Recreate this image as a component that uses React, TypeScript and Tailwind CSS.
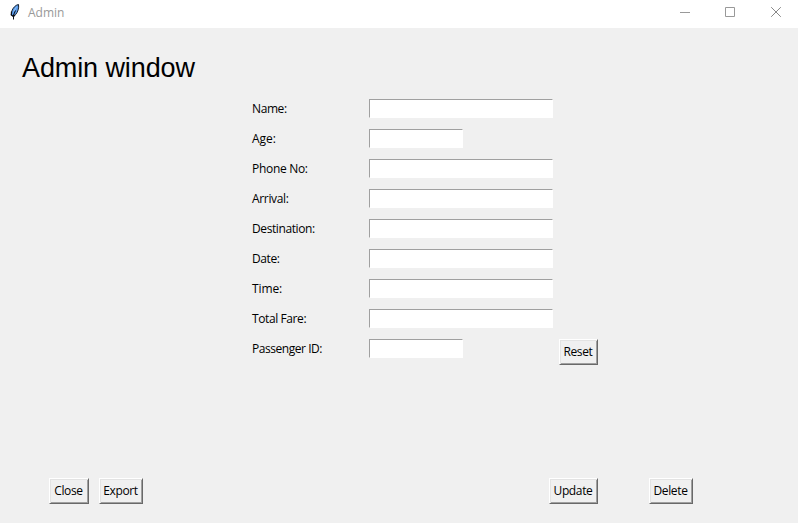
type Field = { label: string; short?: boolean; spacing: string };

const fields: Field[] = [
  { label: 'Name:', spacing: 'tracking-[-0.4px]' },
  { label: 'Age:', short: true, spacing: 'tracking-[0px]' },
  { label: 'Phone No:', spacing: 'tracking-[-0.3px]' },
  { label: 'Arrival:', spacing: 'tracking-[-0.33px]' },
  { label: 'Destination:', spacing: 'tracking-[-0.4px]' },
  { label: 'Date:', spacing: 'tracking-[-0.4px]' },
  { label: 'Time:', spacing: 'tracking-[-0.1px]' },
  { label: 'Total Fare:', spacing: 'tracking-[-0.4px]' },
  { label: 'Passenger ID:', short: true, spacing: 'tracking-[-0.45px]' },
];

function TkButton({ label, className }: { label: string; className: string }) {
  return (
    <button
      className={`flex h-[26px] shrink-0 items-center justify-center whitespace-nowrap border border-t-white border-l-white border-r-[#696969] border-b-[#696969] bg-[#f0f0f0] pr-px tracking-[-0.35px] shadow-[inset_1px_1px_0_#e3e3e3,inset_-1px_-1px_0_#a0a0a0] ${className}`}
    >
      {label}
    </button>
  );
}

function Feather() {
  return (
    <svg width="12" height="18" viewBox="0 0 12 18" className="ml-[9px] mt-[3px] shrink-0">
      <path
        d="M9.500 1.500C6.500 2 3.800 5 2.800 8.200L2.300 12l2.200 1.500 2.200-2C8.800 9 10.200 5 9.500 1.500Z"
        fill="#5a9cec"
        stroke="#16202e"
        strokeWidth="1"
      />
      <path d="M8.300 3C6.300 4.500 4.600 7 4 9.500l2.500-3Z" fill="#8fc2fa" />
      <path d="M2.500 8.500 2.300 12l2.200 1.500 1.500-1.500" fill="none" stroke="#0b0f16" strokeWidth="1.200" />
      <path d="M6.500 7.500 4.500 12v4.500" fill="none" stroke="#0b0f16" strokeWidth="1" />
    </svg>
  );
}

function TitleBar() {
  return (
    <header className="flex h-7 bg-white text-[#999999]">
      <Feather />
      <span className="ml-[7px] mt-[5px] text-xs leading-4">Admin</span>
      <svg width="102" height="12" viewBox="0 0 102 12" className="ml-auto mr-[16px] mt-[6px]" fill="none" stroke="#999999">
        <path d="M0 6.500h10" />
        <path d="M45.500 1.500h9v9h-9z" />
        <path d="M91.200 1.200l9.600 9.600M100.800 1.200l-9.600 9.600" stroke="#888888" />
      </svg>
    </header>
  );
}

export default function App() {
  return (
    <div className="flex h-[523px] w-[798px] flex-col overflow-hidden bg-[#f0f0f0] font-['Open_Sans','Noto_Sans',sans-serif] text-xs text-black">
      <TitleBar />
      <h1 className="ml-[22px] mt-[24px] h-[32px] font-['Liberation_Sans',sans-serif] text-[27px] leading-8 tracking-[-0.1px]">Admin window</h1>
      <div className="ml-[252px] mt-[15px] flex items-end">
        <form className="flex w-[307px] flex-col gap-[11px]">
          {fields.map((f) => (
            <label key={f.label} className="flex h-[19px] items-center">
              <span className={`w-[117px] ${f.spacing}`}>{f.label}</span>
              <input
                className={`h-[19px] border border-t-[#a0a0a0] border-l-[#a0a0a0] border-r-white border-b-white bg-white outline-none ${f.short ? 'w-[94px]' : 'w-[184px]'}`}
              />
            </label>
          ))}
        </form>
        <TkButton label="Reset" className="-mb-[7px] w-[39px]" />
      </div>
      <footer className="mb-[19px] ml-[49px] mr-[105px] mt-auto flex">
        <TkButton label="Close" className="w-[40px]" />
        <TkButton label="Export" className="ml-[10px] w-[44px]" />
        <TkButton label="Update" className="ml-auto w-[49px]" />
        <TkButton label="Delete" className="ml-[51px] w-[44px]" />
      </footer>
    </div>
  );
}
